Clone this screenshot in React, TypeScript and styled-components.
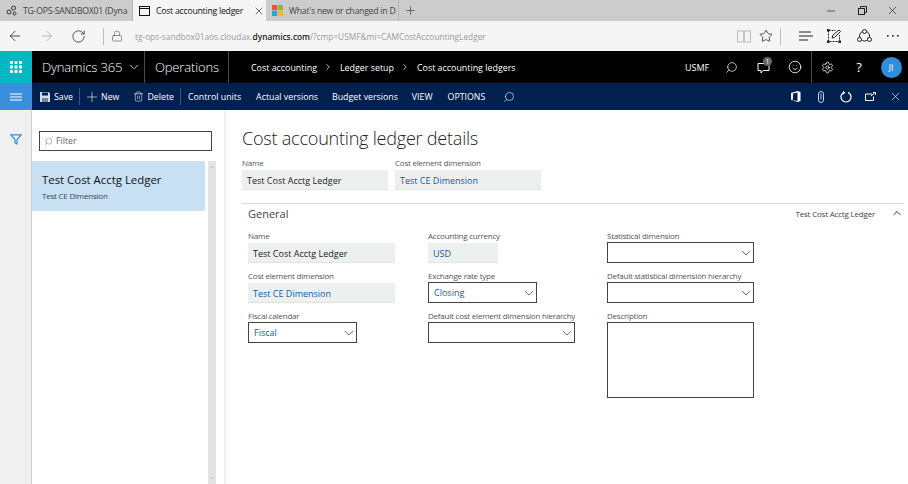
import styled, { createGlobalStyle } from 'styled-components'
import {
  ArrowLeft,
  ArrowRight,
  ChevronDown,
  ChevronRight,
  ChevronUp,
  Lock,
  Minus,
  Plus,
  RotateCw,
  Search,
  Settings,
  Smile,
  Star,
  Trash2,
  X,
} from 'lucide-react'

const GlobalStyle = createGlobalStyle`
  html, body { margin: 0; padding: 0; background: #fff; }
  body { width: 908px; height: 484px; overflow: hidden; font-family: "Open Sans", "Noto Sans", sans-serif; }
  * { box-sizing: border-box; }
`

const Page = styled.div`
  display: flex;
  flex-direction: column;
  width: 908px;
  height: 484px;
  overflow: hidden;
`

const TabStrip = styled.div`
  display: flex;
  align-items: stretch;
  height: 21px;
  background: #cccccc;
  flex: none;
`

const Tab = styled.div<{ $active?: boolean }>`
  display: flex;
  align-items: center;
  width: 133px;
  padding-left: 6px;
  gap: 6px;
  font-size: 8.7px;
  white-space: nowrap;
  overflow: hidden;
  color: ${(p) => (p.$active ? '#111' : '#444')};
  background: ${(p) => (p.$active ? '#f5f5f5' : '#cccccc')};
  border-right: 1px solid ${(p) => (p.$active ? '#f5f5f5' : '#b4b4b4')};
  svg { flex: none; }
`

const TabTitle = styled.span`
  flex: 1;
  letter-spacing: -0.24px;
`

const NewTab = styled.div`
  width: 22px;
  display: flex;
  align-items: center;
  justify-content: center;
  color: #333;
`

const WindowButtons = styled.div`
  margin-left: auto;
  display: flex;
  align-items: center;
  padding-right: 1px;
  color: #222;
`

const AddressBar = styled.div`
  display: flex;
  align-items: center;
  height: 30px;
  flex: none;
  background: #f5f5f5;
  color: #222;
`

const BrowserNav = styled.div`
  display: flex;
  align-items: center;
  gap: 16px;
  padding-left: 7px;
  width: 103px;
  height: 100%;
  svg:nth-child(2) { color: #aaa; }
`

const Divider = styled.div<{ $ml?: number }>`
  width: 1px;
  height: 17px;
  background: #bdbdbd;
  flex: none;
  margin-left: ${(p) => p.$ml ?? 0}px;
`

const Url = styled.div`
  margin-left: 6px;
  font-size: 8.3px;
  color: #9a9a9a;
  white-space: nowrap;
  flex: 1;
  b { color: #222; font-weight: 600; }
`

const BrowserTools = styled.div`
  display: flex;
  align-items: center;
  height: 100%;
  padding-right: 3px;
`

const ToolSlot = styled.div<{ $w: number; $ml?: number }>`
  width: ${(p) => p.$w}px;
  margin-left: ${(p) => p.$ml ?? 0}px;
  display: flex;
  align-items: center;
  justify-content: center;
  flex: none;
`

const NavBar = styled.div`
  display: flex;
  align-items: stretch;
  height: 32px;
  flex: none;
  background: #000;
  color: #fff;
`

const Waffle = styled.div`
  width: 32px;
  background: #00b7c3;
  display: flex;
  align-items: center;
  justify-content: center;
`

const Brand = styled.div`
  display: flex;
  align-items: center;
  gap: 5px;
  width: 113px;
  padding-left: 10px;
  font-size: 13px;
  font-weight: 300;
  letter-spacing: -0.15px;
  white-space: nowrap;
  border-right: 1px solid #4a4a4a;
`

const Product = styled.div`
  display: flex;
  align-items: center;
  width: 84px;
  padding-left: 10px;
  font-size: 13px;
  font-weight: 300;
  letter-spacing: -0.15px;
  border-right: 1px solid #4a4a4a;
`

const Crumbs = styled.div`
  display: flex;
  align-items: center;
  gap: 6.5px;
  padding-left: 22px;
  font-size: 8.9px;
  white-space: nowrap;
  flex: 1;
`

const NavRight = styled.div`
  display: flex;
  align-items: center;
  padding-right: 1px;
`

const Company = styled.span`
  font-size: 9px;
  width: 30px;
`

const NavSlot = styled.div<{ $line?: boolean }>`
  position: relative;
  width: 32px;
  height: 32px;
  display: flex;
  align-items: center;
  justify-content: center;
  font-size: 13px;
  ${(p) => (p.$line ? 'border-left: 1px solid #4a4a4a;' : '')}
`

const Badge = styled.span`
  position: absolute;
  top: 6px;
  right: 7px;
  width: 9px;
  height: 9px;
  border-radius: 50%;
  background: #666;
  font-size: 7px;
  line-height: 9px;
  text-align: center;
`

const Avatar = styled.div`
  width: 21px;
  height: 21px;
  border-radius: 50%;
  background: #2f8fdc;
  font-size: 8.5px;
  display: flex;
  align-items: center;
  justify-content: center;
`

const ActionBar = styled.div`
  display: flex;
  align-items: stretch;
  height: 27px;
  flex: none;
  background: #002050;
  color: #fff;
`

const Hamburger = styled.div`
  width: 32px;
  background: #3a8fdc;
  display: flex;
  align-items: center;
  justify-content: center;
`

const ActionItems = styled.div`
  display: flex;
  align-items: center;
  flex: 1;
  padding-left: 8px;
`

const Action = styled.div<{ $mr?: number }>`
  display: flex;
  align-items: center;
  gap: 4px;
  font-size: 8.8px;
  white-space: nowrap;
  margin-right: ${(p) => p.$mr ?? 14}px;
`

const ActionSep = styled.div`
  width: 1px;
  height: 17px;
  background: #3b5580;
  margin-right: 7px;
`

const ActionRight = styled.div`
  display: flex;
  align-items: center;
`

const ActionSlot = styled.div`
  width: 25px;
  height: 27px;
  display: flex;
  align-items: center;
  justify-content: center;
`

const NewGlyph = styled(Plus)`
  margin: 0 -3px;
`

const DeleteGlyph = styled(Trash2)`
  margin-right: -1px;
`

const FlippedSearch = styled(Search)`
  transform: scaleX(-1);
  flex: none;
`

const Body = styled.div`
  flex: 1;
  display: flex;
  min-height: 0;
`

const Rail = styled.div`
  width: 32px;
  flex: none;
  background: #f0f0f0;
  border-right: 1px solid #cfcfcf;
  padding: 24px 0 0 10px;
  svg { display: block; }
`

const ListPane = styled.div`
  width: 194px;
  flex: none;
  border-right: 2px solid #f0f0f0;
  display: flex;
  flex-direction: column;
  padding-top: 21px;
`

const FilterBox = styled.div`
  margin-left: 7px;
  width: 173px;
  height: 20px;
  border: 1px solid #444;
  display: flex;
  align-items: center;
  gap: 3px;
  padding-left: 4px;
  font-size: 8.8px;
  color: #666;
`

const ListArea = styled.div`
  flex: 1;
  display: flex;
  margin-top: 10px;
  min-height: 0;
`

const ListColumn = styled.div`
  width: 173px;
  margin-right: 3px;
`

const ListRow = styled.div`
  height: 50px;
  background: #c7e0f4;
  border-top: 1px solid #d8e2ea;
  border-bottom: 1px solid #d8e2ea;
  padding: 9px 0 0 10px;
`

const RowTitle = styled.div`
  font-size: 11.4px;
  line-height: 18px;
  color: #111;
`

const RowSub = styled.div`
  font-size: 8px;
  letter-spacing: -0.22px;
  line-height: 13px;
  color: #444;
`

const Scrollbar = styled.div`
  width: 8px;
  background: #e3e3e3;
  display: flex;
  flex-direction: column;
  justify-content: space-between;
  align-items: center;
  color: #777;
  padding: 3px 0;
`

const Content = styled.div`
  flex: 1;
  padding: 16px 4px 0 16px;
`

const Title = styled.h1`
  margin: 0;
  font-size: 18.1px;
  letter-spacing: -0.25px;
  line-height: 25px;
  font-weight: 300;
  color: #222;
  white-space: nowrap;
`

const HeaderFields = styled.div`
  display: flex;
  gap: 7px;
  margin-top: 6px;
`

const Field = styled.div<{ $w: number }>`
  width: ${(p) => p.$w}px;
  height: 40px;
`

const HeaderField = styled(Field)`
  height: 33px;
`

const TallField = styled(Field)`
  height: 88px;
`

const Label = styled.div`
  font-size: 8px;
  letter-spacing: -0.22px;
  line-height: 12px;
  height: 12px;
  color: #555;
  white-space: nowrap;
`

const ReadOnly = styled.div<{ $link?: boolean }>`
  height: 20px;
  margin-top: 1px;
  background: #eef0f0;
  border-bottom: 1px solid #e2e4e4;
  padding-left: 5px;
  font-size: 9px;
  line-height: 21px;
  color: ${(p) => (p.$link ? '#0b5cab' : '#222')};
`

const Select = styled.div`
  height: 21px;
  border: 1px solid #444;
  display: flex;
  align-items: center;
  justify-content: space-between;
  padding-left: 5px;
  font-size: 9px;
  color: #0b5cab;
  svg { margin-right: -1px; }
`

const TextBox = styled.div`
  height: 76px;
  border: 1px solid #444;
`

const Section = styled.section`
  margin-top: 13px;
  border-top: 1px solid #d6d6d6;
`

const SectionHead = styled.div`
  display: flex;
  align-items: center;
  justify-content: space-between;
  height: 18px;
  margin-bottom: 1px;
  padding: 0 1px 0 6px;
`

const SectionName = styled.span`
  font-size: 11px;
  color: #444;
`

const SectionSummary = styled.div`
  display: flex;
  align-items: center;
  gap: 16px;
  font-size: 8px;
  letter-spacing: -0.2px;
  color: #444;
  svg { color: #222; }
`

const FieldGrid = styled.div`
  display: grid;
  grid-template-columns: 180px 179px 147px;
  padding: 7px 0 0 6px;
`

const FieldColumn = styled.div`
  display: flex;
  flex-direction: column;
`

const Combo = ({ value }: { value?: string }) => (
  <Select>
    <span>{value}</span>
    <ChevronDown size={16} strokeWidth={1} color="#333" />
  </Select>
)

const WaffleIcon = () => (
  <svg width="12" height="12" viewBox="0 0 12 12" fill="#fff">
    {[0, 4.5, 9].map((y) =>
      [0, 4.5, 9].map((x) => <rect key={`${x}-${y}`} x={x} y={y} width="3" height="3" />)
    )}
  </svg>
)

const HubIcon = () => (
  <svg width="11" height="11" viewBox="0 0 11 11" fill="none" stroke="#333" strokeWidth="1">
    <circle cx="3" cy="7" r="2" />
    <circle cx="7.5" cy="3" r="2" />
    <circle cx="8.5" cy="8.5" r="1.5" />
  </svg>
)

const PageIcon = () => (
  <svg width="11" height="10" viewBox="0 0 11 10" fill="none" stroke="#111" strokeWidth="1">
    <rect x="0.5" y="0.5" width="10" height="9" />
    <line x1="0.5" y1="2.5" x2="10.5" y2="2.5" />
  </svg>
)

const MsLogo = () => (
  <svg width="11" height="11" viewBox="0 0 11 11">
    <rect width="5.2" height="5.2" fill="#e8562a" />
    <rect x="5.8" width="5.2" height="5.2" fill="#8dbb2a" />
    <rect y="5.8" width="5.2" height="5.2" fill="#1ea5e8" />
    <rect x="5.8" y="5.8" width="5.2" height="5.2" fill="#f5bb1b" />
  </svg>
)

const RestoreIcon = () => (
  <svg width="9" height="9" viewBox="0 0 9 9" fill="none" stroke="#222" strokeWidth="1">
    <rect x="0.5" y="2.5" width="6" height="6" />
    <path d="M2.5 2.5V.5h6v6H6.5" />
  </svg>
)

const ReadingIcon = () => (
  <svg width="14" height="13" viewBox="0 0 14 13" fill="none" stroke="#bbb" strokeWidth="1">
    <rect x="0.5" y="1" width="6.2" height="11" />
    <rect x="7.3" y="1" width="6.2" height="11" />
  </svg>
)

const HubLinesIcon = () => (
  <svg width="14" height="10" viewBox="0 0 14 10" fill="none" stroke="#222" strokeWidth="1.1">
    <path d="M0 1h12M0 5h14M0 9h9" />
  </svg>
)

const NoteIcon = () => (
  <svg width="14" height="14" viewBox="0 0 14 14" fill="none" stroke="#222" strokeWidth="1">
    <path d="M1.5 1.5h7M1.5 1.5v11h11V6" strokeDasharray="2 1" />
    <path d="M5 9l1-3 6-5 1.5 1.5-6 6z" />
    <rect x="0" y="0" width="2" height="2" fill="#222" />
    <rect x="0" y="12" width="2" height="2" fill="#222" />
    <rect x="12" y="12" width="2" height="2" fill="#222" />
  </svg>
)

const ShareIcon = () => (
  <svg width="15" height="14" viewBox="0 0 15 14" fill="none" stroke="#222" strokeWidth="1">
    <circle cx="7.5" cy="7" r="5" />
    <circle cx="7.5" cy="2.5" r="2" fill="#f5f5f5" />
    <circle cx="2.5" cy="10.5" r="2" fill="#f5f5f5" />
    <circle cx="12.5" cy="10.5" r="2" fill="#f5f5f5" />
  </svg>
)

const MoreIcon = () => (
  <svg width="12" height="2" viewBox="0 0 12 2" fill="#222">
    <rect width="1.6" height="1.6" />
    <rect x="5" width="1.6" height="1.6" />
    <rect x="10" width="1.6" height="1.6" />
  </svg>
)

const SaveIcon = () => (
  <svg width="10" height="10" viewBox="0 0 10 10">
    <path d="M0 0h8.5L10 1.5V10H0z" fill="#d5dde8" />
    <rect x="2" y="0.5" width="6" height="3" fill="#002050" />
    <rect x="2" y="6" width="6" height="4" fill="#6f83a3" />
  </svg>
)

const FeedbackIcon = () => (
  <svg width="13" height="13" viewBox="0 0 13 13" fill="none" stroke="#fff" strokeWidth="1">
    <path d="M1 2.5h11v7H6l-2 2.5v-2.5H1z" />
  </svg>
)

const OfficeIcon = () => (
  <svg width="10" height="11" viewBox="0 0 10 11" fill="#fff">
    <path d="M0 2L6.5 0l3 1v9l-3 1L0 9l6.5 1V1.5L2 2.5v6L0 9z" />
  </svg>
)

const AttachIcon = () => (
  <svg width="6" height="12" viewBox="0 0 6 12" fill="none" stroke="#c9d4e4" strokeWidth="1">
    <rect x="0.5" y="0.5" width="5" height="11" rx="2.5" />
    <path d="M3 2.5v6" />
  </svg>
)

const RefreshIcon = () => (
  <svg width="12" height="12" viewBox="0 0 12 12" fill="none" stroke="#fff" strokeWidth="1.2">
    <path d="M4 1.4A5 5 0 1 0 8 1.4" />
    <path d="M3 .5l1.4 1.2L3 3" />
  </svg>
)

const OpenIcon = () => (
  <svg width="11" height="9" viewBox="0 0 11 9" fill="none" stroke="#fff" strokeWidth="1">
    <path d="M7 2H.5v6.5h8V4.5" />
    <path d="M6 4l4-3.5M8 .5h2.5V3" />
  </svg>
)

const MenuIcon = () => (
  <svg width="12" height="8" viewBox="0 0 12 8" fill="none" stroke="#fff" strokeWidth="1.2">
    <path d="M0 1h12M0 4h12M0 7h12" />
  </svg>
)

const FilterIcon = () => (
  <svg width="12" height="11" viewBox="0 0 12 11" fill="none" stroke="#2f8fdc" strokeWidth="1.2">
    <path d="M.8.8h10.4L7 5.5V10L5 8.5v-3z" />
  </svg>
)

const App = () => {
  return (
    <Page>
      <GlobalStyle />
      <TabStrip>
        <Tab>
          <HubIcon />
          <TabTitle>TG-OPS-SANDBOX01 (Dyna</TabTitle>
        </Tab>
        <Tab $active>
          <PageIcon />
          <TabTitle>Cost accounting ledger</TabTitle>
          <ToolSlot $w={20}>
            <X size={12} strokeWidth={1.2} />
          </ToolSlot>
        </Tab>
        <Tab>
          <MsLogo />
          <TabTitle>What's new or changed in D</TabTitle>
        </Tab>
        <NewTab>
          <Plus size={13} strokeWidth={1.2} />
        </NewTab>
        <WindowButtons>
          <ToolSlot $w={32}>
            <Minus size={12} strokeWidth={1.4} />
          </ToolSlot>
          <ToolSlot $w={30}>
            <RestoreIcon />
          </ToolSlot>
          <ToolSlot $w={30}>
            <X size={13} strokeWidth={1.2} />
          </ToolSlot>
        </WindowButtons>
      </TabStrip>

      <AddressBar>
        <BrowserNav>
          <ArrowLeft size={16} strokeWidth={1.2} />
          <ArrowRight size={16} strokeWidth={1.2} />
          <RotateCw size={15} strokeWidth={1.2} />
        </BrowserNav>
        <Divider />
        <ToolSlot $w={25}>
          <Lock size={12} strokeWidth={1.1} color="#444" />
        </ToolSlot>
        <Url>
          tg-ops-sandbox01aos.cloudax.<b>dynamics.com</b>/?cmp=USMF&amp;mi=CAMCostAccountingLedger
        </Url>
        <BrowserTools>
          <ToolSlot $w={22}>
            <ReadingIcon />
          </ToolSlot>
          <ToolSlot $w={22}>
            <Star size={14} strokeWidth={1.3} />
          </ToolSlot>
          <Divider $ml={3} />
          <ToolSlot $w={26} $ml={12}>
            <HubLinesIcon />
          </ToolSlot>
          <ToolSlot $w={26} $ml={2}>
            <NoteIcon />
          </ToolSlot>
          <ToolSlot $w={26} $ml={4}>
            <ShareIcon />
          </ToolSlot>
          <ToolSlot $w={24} $ml={4}>
            <MoreIcon />
          </ToolSlot>
        </BrowserTools>
      </AddressBar>

      <NavBar>
        <Waffle>
          <WaffleIcon />
        </Waffle>
        <Brand>
          Dynamics 365
          <ChevronDown size={14} strokeWidth={1.3} />
        </Brand>
        <Product>Operations</Product>
        <Crumbs>
          Cost accounting
          <ChevronRight size={10} strokeWidth={1.7} />
          Ledger setup
          <ChevronRight size={10} strokeWidth={1.7} />
          Cost accounting ledgers
        </Crumbs>
        <NavRight>
          <Company>USMF</Company>
          <NavSlot>
            <FlippedSearch size={13} strokeWidth={1.3} />
          </NavSlot>
          <NavSlot>
            <FeedbackIcon />
            <Badge>1</Badge>
          </NavSlot>
          <NavSlot>
            <Smile size={14} strokeWidth={1.4} />
          </NavSlot>
          <NavSlot $line>
            <Settings size={13} strokeWidth={1.5} />
          </NavSlot>
          <NavSlot>?</NavSlot>
          <NavSlot>
            <Avatar>JI</Avatar>
          </NavSlot>
        </NavRight>
      </NavBar>

      <ActionBar>
        <Hamburger>
          <MenuIcon />
        </Hamburger>
        <ActionItems>
          <Action $mr={6}>
            <SaveIcon />
            Save
          </Action>
          <ActionSep />
          <Action>
            <NewGlyph size={16} strokeWidth={0.9} />
            New
          </Action>
          <Action $mr={6}>
            <DeleteGlyph size={11} strokeWidth={1.2} />
            Delete
          </Action>
          <ActionSep />
          <Action $mr={15}>Control units</Action>
          <Action>Actual versions</Action>
          <Action>Budget versions</Action>
          <Action $mr={15}>VIEW</Action>
          <Action $mr={18}>OPTIONS</Action>
          <FlippedSearch size={12} strokeWidth={1.2} />
        </ActionItems>
        <ActionRight>
          <ActionSlot>
            <OfficeIcon />
          </ActionSlot>
          <ActionSlot>
            <AttachIcon />
          </ActionSlot>
          <ActionSlot>
            <RefreshIcon />
          </ActionSlot>
          <ActionSlot>
            <OpenIcon />
          </ActionSlot>
          <ActionSlot>
            <X size={13} strokeWidth={1.2} />
          </ActionSlot>
        </ActionRight>
      </ActionBar>

      <Body>
        <Rail>
          <FilterIcon />
        </Rail>
        <ListPane>
          <FilterBox>
            <FlippedSearch size={9} strokeWidth={1.2} />
            Filter
          </FilterBox>
          <ListArea>
            <ListColumn>
              <ListRow>
                <RowTitle>Test Cost Acctg Ledger</RowTitle>
                <RowSub>Test CE Dimension</RowSub>
              </ListRow>
            </ListColumn>
            <Scrollbar>
              <ChevronUp size={6} strokeWidth={1.5} />
              <ChevronDown size={6} strokeWidth={1.5} />
            </Scrollbar>
          </ListArea>
        </ListPane>
        <Content>
          <Title>Cost accounting ledger details</Title>
          <HeaderFields>
            <HeaderField $w={146}>
              <Label>Name</Label>
              <ReadOnly>Test Cost Acctg Ledger</ReadOnly>
            </HeaderField>
            <HeaderField $w={146}>
              <Label>Cost element dimension</Label>
              <ReadOnly $link>Test CE Dimension</ReadOnly>
            </HeaderField>
          </HeaderFields>
          <Section>
            <SectionHead>
              <SectionName>General</SectionName>
              <SectionSummary>
                Test Cost Acctg Ledger
                <ChevronUp size={12} strokeWidth={1.9} />
              </SectionSummary>
            </SectionHead>
            <FieldGrid>
              <FieldColumn>
                <Field $w={147}>
                  <Label>Name</Label>
                  <ReadOnly>Test Cost Acctg Ledger</ReadOnly>
                </Field>
                <Field $w={147}>
                  <Label>Cost element dimension</Label>
                  <ReadOnly $link>Test CE Dimension</ReadOnly>
                </Field>
                <Field $w={109}>
                  <Label>Fiscal calendar</Label>
                  <Combo value="Fiscal" />
                </Field>
              </FieldColumn>
              <FieldColumn>
                <Field $w={70}>
                  <Label>Accounting currency</Label>
                  <ReadOnly $link>USD</ReadOnly>
                </Field>
                <Field $w={109}>
                  <Label>Exchange rate type</Label>
                  <Combo value="Closing" />
                </Field>
                <Field $w={147}>
                  <Label>Default cost element dimension hierarchy</Label>
                  <Combo />
                </Field>
              </FieldColumn>
              <FieldColumn>
                <Field $w={147}>
                  <Label>Statistical dimension</Label>
                  <Combo />
                </Field>
                <Field $w={147}>
                  <Label>Default statistical dimension hierarchy</Label>
                  <Combo />
                </Field>
                <TallField $w={147}>
                  <Label>Description</Label>
                  <TextBox />
                </TallField>
              </FieldColumn>
            </FieldGrid>
          </Section>
        </Content>
      </Body>
    </Page>
  )
}

export default App
